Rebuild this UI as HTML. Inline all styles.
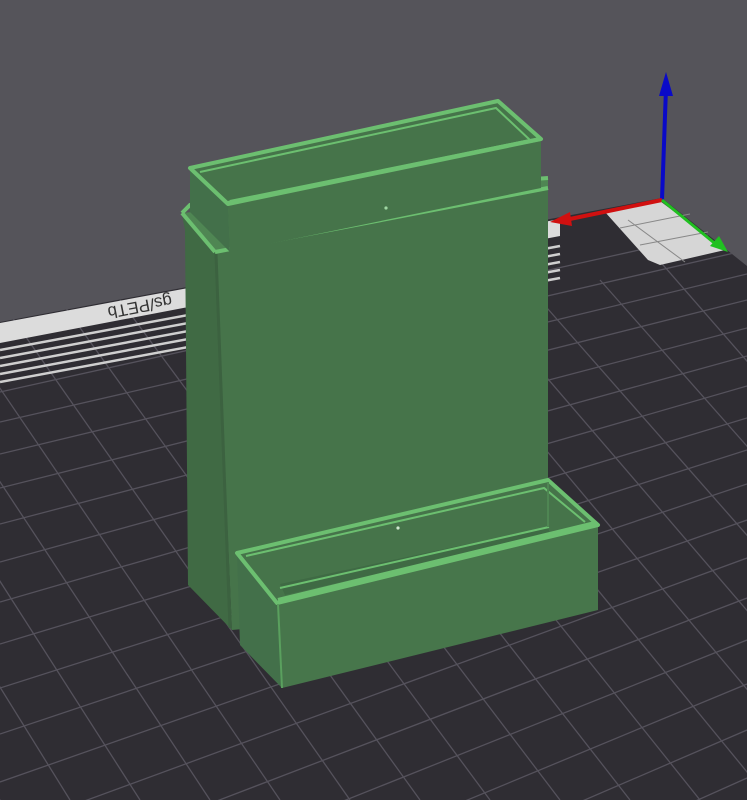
<!DOCTYPE html>
<html><head><meta charset="utf-8"><style>
html,body{margin:0;padding:0;background:#55545a;width:747px;height:800px;overflow:hidden}
svg{display:block;position:absolute;left:0;top:0}
</style></head><body>
<svg width="747" height="800" viewBox="0 0 747 800" xmlns="http://www.w3.org/2000/svg" overflow="hidden">
<defs>
<clipPath id="bed"><polygon points="0,322 662,198 747,266 747,800 0,800"/></clipPath>
</defs>
<rect width="747" height="800" fill="#55545a"/>
<polygon points="0,322 662,198 747,266 747,800 0,800" fill="#2f2d33"/>
<g clip-path="url(#bed)" stroke="#55525c" stroke-width="1.3">
<line x1="0" y1="392" x2="747" y2="226"/>
<line x1="0" y1="422" x2="747" y2="250"/>
<line x1="0" y1="454" x2="747" y2="274"/>
<line x1="0" y1="488" x2="747" y2="300"/>
<line x1="0" y1="524" x2="747" y2="328"/>
<line x1="0" y1="562" x2="747" y2="356"/>
<line x1="0" y1="602" x2="747" y2="386"/>
<line x1="0" y1="644" x2="747" y2="418"/>
<line x1="0" y1="688" x2="747" y2="450"/>
<line x1="0" y1="734" x2="747" y2="484"/>
<line x1="0" y1="782" x2="747" y2="520"/>
<line x1="0" y1="832" x2="747" y2="558"/>
<line x1="0" y1="884" x2="747" y2="598"/>
<line x1="0" y1="938" x2="747" y2="640"/>
<line x1="0" y1="994" x2="747" y2="684"/>
<line x1="0" y1="1052" x2="747" y2="730"/>
<line x1="0" y1="1112" x2="747" y2="778"/>
<line x1="-420" y1="300" x2="-140" y2="800"/>
<line x1="-360" y1="300" x2="-70" y2="800"/>
<line x1="-300" y1="300" x2="0" y2="800"/>
<line x1="-240" y1="300" x2="70" y2="800"/>
<line x1="-180" y1="300" x2="140" y2="800"/>
<line x1="-120" y1="300" x2="210" y2="800"/>
<line x1="-60" y1="300" x2="280" y2="800"/>
<line x1="0" y1="300" x2="350" y2="800"/>
<line x1="60" y1="300" x2="420" y2="800"/>
<line x1="120" y1="300" x2="490" y2="800"/>
<line x1="180" y1="300" x2="560" y2="800"/>
<line x1="240" y1="300" x2="630" y2="800"/>
<line x1="300" y1="300" x2="700" y2="800"/>
<line x1="360" y1="300" x2="770" y2="800"/>
<line x1="420" y1="300" x2="840" y2="800"/>
<line x1="480" y1="300" x2="910" y2="800"/>
<line x1="540" y1="300" x2="980" y2="800"/>
<line x1="600" y1="280" x2="1060" y2="800"/>
<line x1="650" y1="250" x2="1130" y2="800"/>
</g>
<polygon points="0,323 560,219 560,236 0,343" fill="#dcdcdc"/>
<g stroke="#cfcfcf" stroke-width="2.5">
<line x1="0" y1="350" x2="560" y2="246"/>
<line x1="0" y1="358" x2="560" y2="254"/>
<line x1="0" y1="366" x2="560" y2="262"/>
<line x1="0" y1="374" x2="560" y2="270"/>
<line x1="0" y1="382" x2="560" y2="278"/>
</g>
<text x="140" y="313" font-family="Liberation Sans, sans-serif" font-size="17" fill="#333" transform="rotate(169 140 307)" text-anchor="middle">gs/PETb</text>
<polygon points="605,212 660,201 725,250 660,265 648,260" fill="#d6d6d6"/>
<g stroke="#888" stroke-width="1"><line x1="628" y1="220" x2="685" y2="262"/><line x1="620" y1="228" x2="690" y2="214"/><line x1="640" y1="245" x2="708" y2="232"/></g>
<line x1="662" y1="200" x2="666" y2="88" stroke="#0a0ac8" stroke-width="4"/>
<polygon points="666,72 659,96 673,96" fill="#0a0ac8"/>
<line x1="662" y1="200" x2="565" y2="220" stroke="#d01010" stroke-width="4"/>
<polygon points="550,222 570,212 572,226" fill="#d01010"/>
<line x1="662" y1="200" x2="718" y2="246" stroke="#20c020" stroke-width="3"/>
<polygon points="728,252 710,246 719,236" fill="#20c020"/>
<polygon points="182,215 215,250 232,630 188,585 185,230" fill="#406a44"/>
<polygon points="215,250 548,186 548,600 232,630" fill="#46744a"/>
<polygon points="182,213 548,178 548,190 215,252" fill="#4f8653"/>
<polyline points="182,213 190,205 548,178" fill="none" stroke="#6cbf70" stroke-width="4"/>
<line x1="215" y1="252" x2="548" y2="188" stroke="#6cbf70" stroke-width="4"/>
<polyline points="182,213 215,252" fill="none" stroke="#6cbf70" stroke-width="4"/>
<line x1="216" y1="254" x2="230" y2="628" stroke="#3c6240" stroke-width="3"/>
<polygon points="190,168 228,204 230,252 190,212" fill="#43704a"/>
<polygon points="228,204 541,139 541,188 230,252" fill="#46744a"/>
<polygon points="190,168 498,101 541,139 228,204" fill="#46744a"/>
<polygon points="190,168 498,101 541,139 228,204" fill="none" stroke="#6cbf70" stroke-width="4" stroke-linejoin="round"/>
<polyline points="200,172 496,108 530,140 228,202" fill="none" stroke="#6cbf70" stroke-width="2"/>
<line x1="230" y1="202" x2="540" y2="139" stroke="#6cbf70" stroke-width="4"/>
<circle cx="386" cy="208" r="1.6" fill="#9fd6a2"/>
<polygon points="237,553 277,603 282,688 240,645" fill="#43704a"/>
<polygon points="277,603 598,525 598,610 282,688" fill="#47764b"/>
<polygon points="237,553 548,480 598,525 277,603" fill="#46744a"/>
<polygon points="280,584 548,527 550,534 285,595" fill="#3f6a44"/>
<polygon points="237,553 548,480 598,525 277,603" fill="none" stroke="#6cbf70" stroke-width="4" stroke-linejoin="round"/>
<polyline points="246,556 544,488 585,522" fill="none" stroke="#6cbf70" stroke-width="2"/>
<line x1="280" y1="588" x2="549" y2="527" stroke="#6cbf70" stroke-width="2"/>
<line x1="278" y1="600" x2="595" y2="523" stroke="#6cbf70" stroke-width="4"/>
<line x1="548" y1="482" x2="548" y2="527" stroke="#4f8653" stroke-width="2"/>
<line x1="278" y1="604" x2="282" y2="688" stroke="#5aa05e" stroke-width="2"/>
<circle cx="398" cy="528" r="1.6" fill="#cfe8cf"/>
</svg>
</body></html>
